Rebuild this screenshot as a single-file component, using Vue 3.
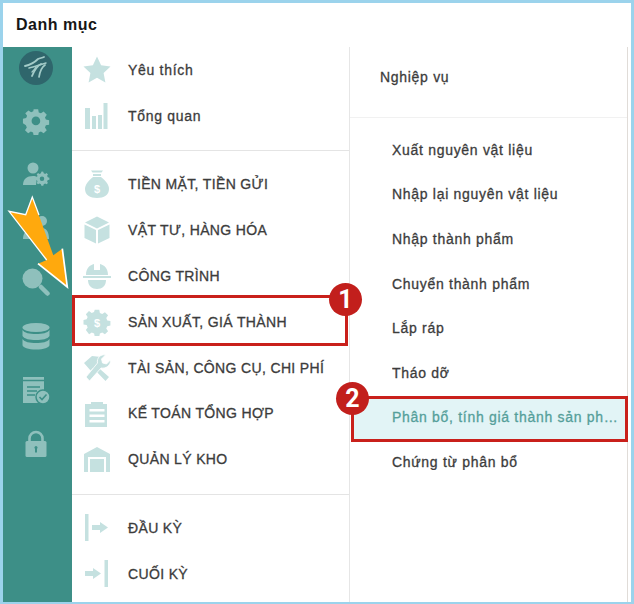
<script setup>
const rail = ['gear', 'usergear', 'users', 'search', 'db', 'doc', 'lock']
const groups = [
  [
    { icon: 'star', label: 'Yêu thích', lower: true },
    { icon: 'bars', label: 'Tổng quan', lower: true },
  ],
  [
    { icon: 'bag', label: 'TIỀN MẶT, TIỀN GỬI' },
    { icon: 'box', label: 'VẬT TƯ, HÀNG HÓA' },
    { icon: 'helmet', label: 'CÔNG TRÌNH' },
    { icon: 'cog', label: 'SẢN XUẤT, GIÁ THÀNH', marked: true },
    { icon: 'tools', label: 'TÀI SẢN, CÔNG CỤ, CHI PHÍ' },
    { icon: 'clip', label: 'KẾ TOÁN TỔNG HỢP' },
    { icon: 'store', label: 'QUẢN LÝ KHO' },
  ],
  [
    { icon: 'in', label: 'ĐẦU KỲ' },
    { icon: 'out', label: 'CUỐI KỲ' },
  ],
]
const subs = [
  'Xuất nguyên vật liệu',
  'Nhập lại nguyên vật liệu',
  'Nhập thành phẩm',
  'Chuyển thành phẩm',
  'Lắp ráp',
  'Tháo dỡ',
  'Phân bổ, tính giá thành sản phẩm',
  'Chứng từ phân bổ',
]
</script>

<template>
  <div class="frame">
    <div class="dialog">
      <header class="title">Danh mục</header>
      <div class="body">
        <nav class="rail">
          <div class="logo">
            <svg viewBox="0 0 34 34" width="34" height="34">
              <circle cx="17" cy="17" r="17" fill="#2f666c" />
              <g fill="none" stroke="#a3cbc8" stroke-linecap="round">
                <path d="M6 15c5-1 9-3 13-7 2-1 4-1 6-2" stroke-width="1.800" />
                <path d="M10 17c5-1 10-3 17-5" stroke-width="1.500" />
                <path d="M22 13c-4 2-6 5-9 12" stroke-width="1.900" />
                <path d="M26 14c-3 2-5 6-6 12" stroke-width="1.700" />
                <path d="M17 16c-1 2-3 4-4 5" stroke-width="1.300" />
              </g>
            </svg>
          </div>
          <svg v-for="r in rail" :key="r" class="rail-icon" viewBox="0 0 28 28" width="28" height="28">
            <g v-if="r === 'gear'" fill="#8fc0bc">
              <path fill-rule="evenodd" d="M11.500 1h5l.7 3.600 2.400 1 3-2 3.500 3.500-2 3 1 2.400 3.600.7v5l-3.600.7-1 2.400 2 3-3.500 3.500-3-2-2.400 1-.7 3.600h-5l-.7-3.600-2.400-1-3 2-3.500-3.500 2-3-1-2.400L-.4 16.500v-5l3.600-.7 1-2.400-2-3L5.700 2.400l3 2 2.400-1zM14 9.200a4.800 4.800 0 1 0 0 9.600 4.800 4.800 0 0 0 0-9.600z" transform="translate(1.300 1.300) scale(.9)" />
            </g>
            <g v-else-if="r === 'usergear'" fill="#8fc0bc">
              <circle cx="11" cy="7" r="5.500" />
              <path d="M1 24c0-6 4-9 10-9 2 0 3 .4 4 1l-1 8z" />
              <path fill-rule="evenodd" d="M20 12.500l1.400.2.5 1.800 1.600.7 1.600-.9 1.500 1.500-.9 1.600.7 1.600 1.800.5v2.100l-1.800.5-.7 1.600.9 1.600-1.500 1.500-1.600-.9-1.600.7-.5 1.800h-2.100l-.5-1.800-1.600-.7-1.600.9-1.500-1.500.9-1.600-.7-1.600-1.800-.5v-2.100l1.800-.5.7-1.600-.9-1.600 1.500-1.500 1.600.9 1.600-.7.5-1.800zM20 18a2.500 2.500 0 1 0 0 5 2.500 2.500 0 0 0 0-5z" transform="translate(2 -.8) scale(.9)" />
            </g>
            <g v-else-if="r === 'users'" fill="#8fc0bc">
              <circle cx="20" cy="7" r="5" />
              <circle cx="10" cy="10" r="5" />
              <path d="M1 25c0-6 3-9 9-9s8 3 8 9z" />
              <path d="M19 14c5 0 8 3 8 11h-7c0-4-1-7-4-9z" />
            </g>
            <g v-else-if="r === 'search'">
              <circle cx="10.500" cy="10.500" r="10" fill="#8fc0bc" />
              <path d="M19 19l6.500 6.500" stroke="#8fc0bc" stroke-width="4.500" stroke-linecap="round" />
            </g>
            <g v-else-if="r === 'db'" fill="#8fc0bc">
              <ellipse cx="14" cy="5.500" rx="13.500" ry="4.500" />
              <path d="M.5 8c2 3 7 4 13.500 4s11.500-1 13.500-4v6c-2 3-7 4-13.500 4S2.500 17 .5 14z" />
              <path d="M.5 17c2 3 7 4 13.500 4s11.500-1 13.500-4v6c0 2.500-6 4.500-13.500 4.500S.5 25.500.5 23z" />
            </g>
            <g v-else-if="r === 'doc'">
              <path d="M1 1h21v26H1z" fill="#8fc0bc" />
              <path d="M1 4.500h21M5 11h13M5 15h10M5 19h8" stroke="#3d8f87" stroke-width="1.600" />
              <circle cx="21" cy="21" r="7" fill="#8fc0bc" stroke="#3d8f87" stroke-width="1.500" />
              <path d="M17.500 21l2.500 2.500 4.500-5" fill="none" stroke="#3d8f87" stroke-width="1.600" />
            </g>
            <g v-else-if="r === 'lock'">
              <path d="M7.500 12V8.500a6.500 6.500 0 0 1 13 0V12" fill="none" stroke="#8fc0bc" stroke-width="2.600" />
              <rect x="3.500" y="11" width="21" height="16" rx="1.500" fill="#8fc0bc" />
              <path d="M14 17.500v5" stroke="#3d8f87" stroke-width="2" />
              <circle cx="14" cy="17.500" r="1.500" fill="#3d8f87" />
            </g>
          </svg>
        </nav>

        <section class="menu">
          <div v-for="(g, gi) in groups" :key="gi" class="group">
            <div v-for="item in g" :key="item.label" class="row" :class="{ marked: item.marked }">
              <svg class="row-icon" viewBox="0 0 28 28" width="28" height="28">
                <path v-if="item.icon === 'star'" d="M14 .5l4.100 8.800 9.400 1.200-6.900 6.500 1.800 9.500L14 21.800 5.600 26.500l1.800-9.500L.5 10.500l9.400-1.200z" fill="#c5e1e0" />
                <g v-else-if="item.icon === 'bars'" fill="#c5e1e0">
                  <path d="M2 6h5v21H2zM9 14h4v13H9zM15 13h4v14h-4zM20.500 1h4v26h-4z" />
                </g>
                <g v-else-if="item.icon === 'bag'" fill="#c5e1e0">
                  <path d="M8 .5h12l-1.500 2h-9zM10 4h8v2h-8z" />
                  <path d="M10 7h8c5 4 8 8 8 12 0 6-5 9-12 9S2 25 2 19c0-4 3-8 8-12z" />
                  <text x="14" y="23" text-anchor="middle" class="dollar">$</text>
                </g>
                <g v-else-if="item.icon === 'box'" fill="#c5e1e0">
                  <path d="M14 .5l12 6-12 6-12-6z" />
                  <path d="M1.500 8.500l11.500 5.500v13.500L1.500 22zM26.500 8.500L15 14v13.500L26.500 22z" />
                </g>
                <g v-else-if="item.icon === 'helmet'" fill="#c5e1e0">
                  <path d="M3 13C3 6 7 3 11 2v6h6V2c4 1 8 4 8 11z" />
                  <path d="M0 14h28v2H0z" />
                  <path d="M5 18h18c0 6-4 9-9 9s-9-3-9-9z" />
                </g>
                <g v-else-if="item.icon === 'cog'">
                  <path d="M11.500 .5h5l.7 3.500 2.600 1.100 3-2 3.500 3.500-2 3 1.100 2.600 3.500.7v5l-3.500.7-1.100 2.600 2 3-3.500 3.500-3-2-2.600 1.100-.7 3.500h-5l-.7-3.500-2.600-1.100-3 2L1.600 23l2-3-1.100-2.600L-1 16.700v-5l3.500-.7 1.100-2.600-2-3L5.100 1.900l3 2 2.600-1.100z" fill="#c5e1e0" transform="translate(1.400 1.400) scale(.9)" />
                  <text x="14" y="18.500" text-anchor="middle" class="dollar">$</text>
                </g>
                <g v-else-if="item.icon === 'tools'" fill="#c5e1e0">
                  <path d="M1 9 9 2l9 1-4 4 1.500 2-2.500 2.500L26 23l-3.500 4L10 14l-2.500 2.500z" />
                  <path d="M27.500 6l-4 4-4-1-1-4 4-4c-5-1-9 3-8 8L3 23l3.500 4L18 14c5 1 10-3 9.500-8z" stroke="#fff" stroke-width=".8" />
                </g>
                <g v-else-if="item.icon === 'clip'" fill="#c5e1e0">
                  <path fill-rule="evenodd" d="M2 5h6V3h12v2h4v23H2zM6.500 10v2.500h15V10zM6.500 15.500V18h15v-2.500zM6.500 21v2.500h15V21z" />
                </g>
                <g v-else-if="item.icon === 'store'" fill="#c5e1e0">
                  <path fill-rule="evenodd" d="M1 9l13-7 13 7v18h-4V12H5v15H1z" />
                  <path d="M7 14h14v13H7z" />
                </g>
                <g v-else-if="item.icon === 'in'" fill="#c5e1e0">
                  <path d="M2 0h3.500v27H2zM9 11h8V8l8 5.500-8 5.500v-3H9z" />
                </g>
                <g v-else-if="item.icon === 'out'" fill="#c5e1e0">
                  <path d="M21.500 0h3.500v27h-3.500zM2 11h8V8l8 5.500-8 5.500v-3H2z" />
                </g>
              </svg>
              <span class="row-label" :class="{ lower: item.lower }">{{ item.label }}</span>
            </div>
          </div>
          <span class="badge badge-one">1</span>
        </section>

        <section class="sub">
          <h2 class="sub-head">Nghiệp vụ</h2>
          <ul class="sub-list">
            <li v-for="(s, i) in subs" :key="s" class="sub-item" :class="{ active: i === 6 }">
              <span class="sub-text">{{ s }}</span>
              <span v-if="i === 6" class="badge badge-two">2</span>
            </li>
          </ul>
        </section>
      </div>

      <svg class="arrow" viewBox="0 0 66 98" width="66" height="98">
        <polygon points="26.300,3 19.700,20.700 3,17.300 40.700,66 32,69.700 61.300,93 56.300,54.700 47.300,61.300" fill="#ffa90d" />
        <polyline points="33,21 26.300,3 19.700,20.700 3,17.300 40.700,66" fill="none" stroke="#fff" stroke-width="1.300" />
        <polyline points="32,69.700 61.300,93 56.300,54.700" fill="none" stroke="#fff" stroke-width="1.700" />
      </svg>
    </div>
  </div>
</template>

<style>
html, body { margin: 0; background: #9bd3ec; }
</style>

<style scoped>
.frame {
  width: 634px;
  height: 604px;
  box-sizing: border-box;
  padding: 3px 3px 2px 3px;
  background: #9bd3ec;
}
.dialog {
  position: relative;
  height: 100%;
  display: flex;
  flex-direction: column;
  background: #fff;
  font-family: "Liberation Sans", Arial, sans-serif;
}
.title {
  height: 44px;
  flex: none;
  box-sizing: border-box;
  padding: 13px 0 0 13px;
  font-size: 16px;
  line-height: 18px;
  font-weight: 700;
  letter-spacing: .5px;
  color: #161616;
}
.body { flex: 1; display: flex; min-height: 0; padding-right: 3px; }
.rail {
  width: 69px;
  flex: none;
  background: #3d8f87;
  display: flex;
  flex-direction: column;
  align-items: center;
  padding: 4px 3px 0 0;
  box-sizing: border-box;
  gap: 25.800px;
}
.logo { height: 34px; margin-bottom: -4px; }
.rail-icon { display: block; }
.menu {
  position: relative;
  width: 277px;
  flex: none;
  border-right: 1px solid #e6e6e6;
  display: flex;
  flex-direction: column;
}
.group { display: flex; flex-direction: column; }
.group + .group { border-top: 1px solid #e4e4e4; }
.group:nth-child(1) { padding: 0 0 11px; }
.group:nth-child(2) { padding: 10px 0 11.700px; }
.group:nth-child(2) .row { height: 45.900px; }
.group:nth-child(3) { padding: 10px 0; }
.row {
  height: 46px;
  display: flex;
  align-items: center;
  padding-left: 11px;
  box-sizing: border-box;
  gap: 17px;
  position: relative;
}
.row-icon { flex: none; display: block; }
.row-label {
  font-size: 14px;
  color: #3c3c3c;
  letter-spacing: .35px;
  -webkit-text-stroke: .3px #3c3c3c;
  white-space: nowrap;
}
.row-label.lower { letter-spacing: .7px; }
.dollar { font: 700 11px "Liberation Sans", sans-serif; fill: #fff; }
.marked::after {
  content: "";
  position: absolute;
  left: 0;
  right: 1px;
  top: -4px;
  bottom: -1px;
  border: 3px solid #c9201b;
}
.sub {
  flex: 1;
  min-width: 0;
  display: flex;
  flex-direction: column;
  border-right: 1px solid #e0dcd8;
}
.sub-head {
  margin: 0;
  height: 71px;
  box-sizing: border-box;
  padding: 21px 0 0 30px;
  font-size: 14px;
  line-height: 18px;
  font-weight: 400;
  letter-spacing: .7px;
  -webkit-text-stroke: .3px #3c3c3c;
  color: #3c3c3c;
  border-bottom: 1px solid #f1f1f1;
}
.sub-list {
  list-style: none;
  margin: 0;
  padding: 9.500px 0 0;
}
.sub-item {
  position: relative;
  height: 44.600px;
  display: flex;
  align-items: center;
  padding: 0 9px 0 42px;
  box-sizing: border-box;
  font-size: 14px;
  letter-spacing: .7px;
  color: #3c3c3c;
  -webkit-text-stroke: .3px #3c3c3c;
}
.sub-text {
  position: relative;
  z-index: 1;
  white-space: nowrap;
  overflow: hidden;
  text-overflow: ellipsis;
}
.sub-item.active::before {
  content: "";
  position: absolute;
  left: 1px;
  right: -1px;
  top: 1px;
  bottom: -2px;
  background: #e2f4f6;
  border: 3px solid #c9201b;
}
.sub-item.active {
  color: #559f9a;
  -webkit-text-stroke: .3px #559f9a;
}
.badge {
  position: absolute;
  width: 33px;
  height: 33px;
  border-radius: 50%;
  background: #c21f1c;
  color: #fff;
  font: 700 25px/33px "Roboto", "Liberation Sans", sans-serif;
  letter-spacing: 0;
  text-align: center;
  -webkit-text-stroke: 0;
  z-index: 2;
}
.badge-one { left: 257px; top: 236px; }
.badge-two { left: -14px; top: -13px; }
.arrow {
  position: absolute;
  left: 3px;
  top: 191px;
  z-index: 3;
}
</style>
